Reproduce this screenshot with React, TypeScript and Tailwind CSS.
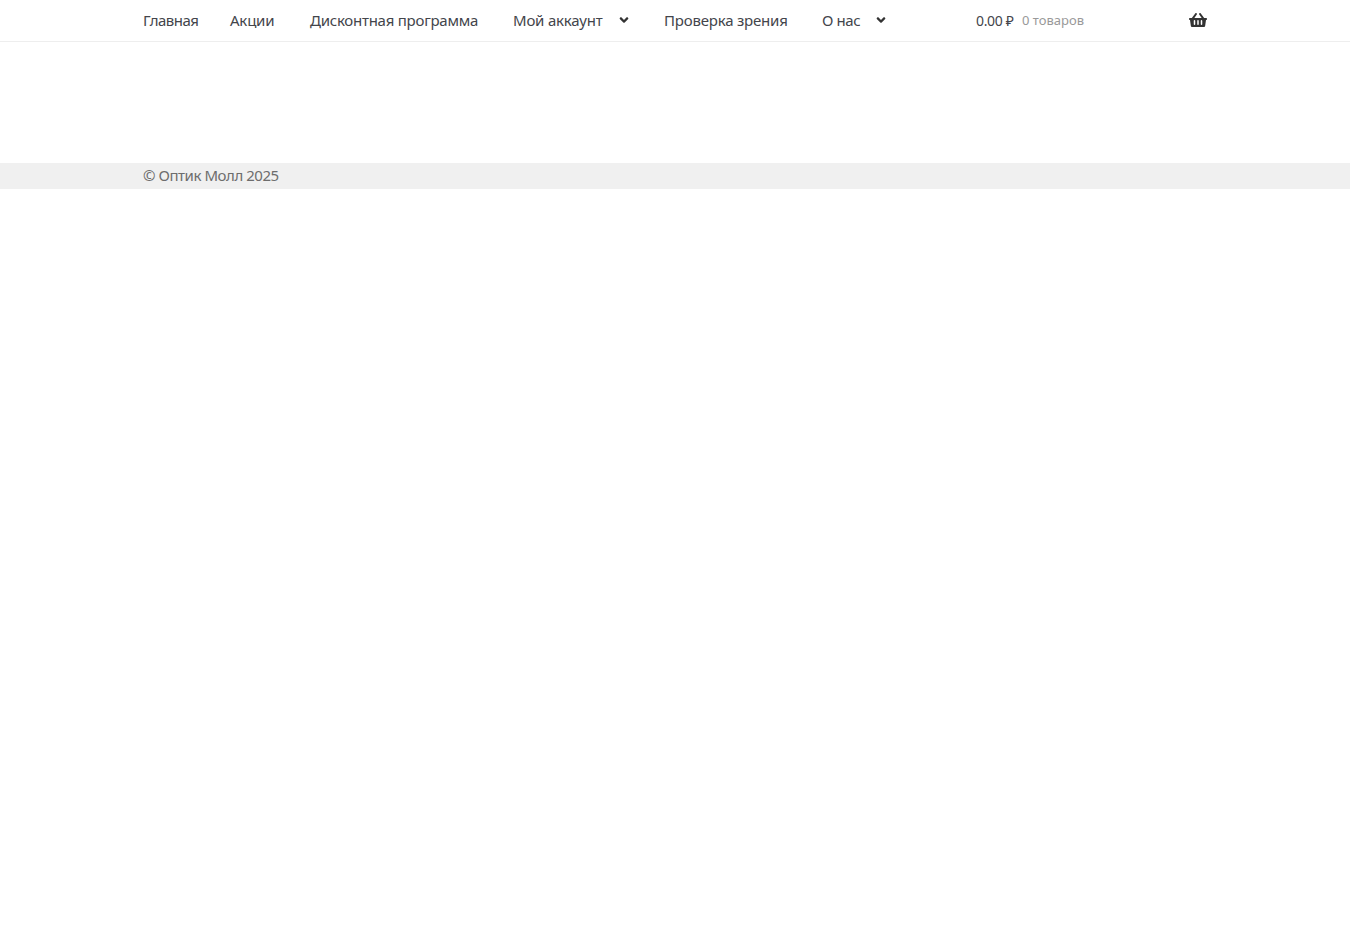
import { FaAngleDown, FaShoppingBasket } from "react-icons/fa";

const font = "font-['Noto_Sans',sans-serif]";

const App: React.FC = () => {
  return (
    <div className={`min-h-[940px] bg-white ${font} text-[#43454b]`}>
      {/* Header */}
      <header className="h-[42px] border-b border-[#eeeeee]">
        <div className="flex h-[41px] items-center pl-[143px] pr-[143px] text-[15px] tracking-[-0.2px]">
          <nav className="flex items-center">
            <a className="w-[87px] tracking-[-0.5px]">Главная</a>
            <a className="w-[80px]">Акции</a>
            <a className="w-[203px] tracking-[-0.25px]">Дисконтная программа</a>
            <a className="flex w-[151px] items-center">
              <span className="w-[106px]">Мой аккаунт</span>
              <FaAngleDown className="-ml-[2px] -mt-[2px] text-[14px] text-[#333333]" />
            </a>
            <a className="w-[158px]">Проверка зрения</a>
            <a className="flex w-[154px] items-center">
              <span className="w-[53px] tracking-[-0.4px]">О нас</span>
              <FaAngleDown className="-ml-[1px] -mt-[2px] text-[14px] text-[#333333]" />
            </a>
          </nav>
          {/* Cart */}
          <div className="flex w-[231px] items-center justify-between">
            <div className="flex items-center">
              <span className="w-[46px] text-[14px] tracking-[-0.35px]">0.00 ₽</span>
              <span className="mt-[1px] text-[13px] tracking-[0px] text-[#999999]">0 товаров</span>
            </div>
            <FaShoppingBasket className="-mt-[2px] text-[18px] text-[#333333]" />
          </div>
        </div>
      </header>

      <div className="h-[121px]" />

      {/* Footer */}
      <footer className="flex h-[26px] items-center bg-[#f0f0f0] pl-[143px] text-[15px] tracking-[-0.45px] text-[#6d6d6d]">
        <span className="-mt-[2px]">© Оптик Молл 2025</span>
      </footer>
    </div>
  );
};

export default App;
